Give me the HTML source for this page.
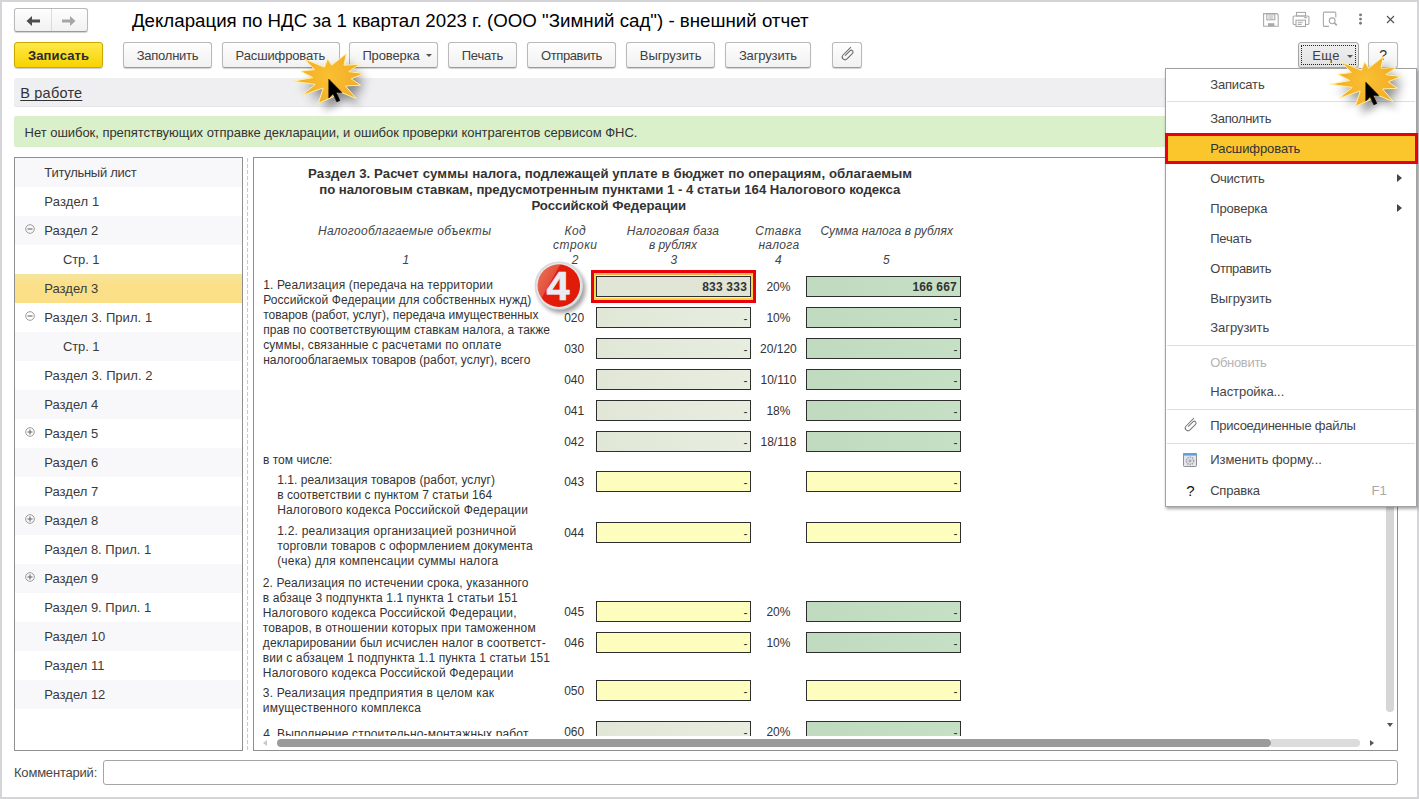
<!DOCTYPE html><html><head><meta charset="utf-8"><style>
html,body{margin:0;padding:0;}
body{width:1419px;height:799px;position:relative;overflow:hidden;background:#fff;font-family:"Liberation Sans",sans-serif;}
.t{position:absolute;white-space:nowrap;font-family:"Liberation Sans",sans-serif;}
.btn{position:absolute;box-sizing:border-box;border:1px solid #b9b9b9;border-bottom-color:#9a9a9a;border-radius:3px;background:linear-gradient(#fefefe,#f1f1f1);box-shadow:0 1px 1px rgba(0,0,0,0.18);}
.fld{position:absolute;box-sizing:border-box;border:1px solid #2e2e2e;}
.lg{background:linear-gradient(90deg,#e1e7d7,#e8eedf);}
.dg{background:linear-gradient(90deg,#bfdabf,#c6e0c6);}
.yl{background:#fdfdbe;}
</style></head><body>
<div style="position:absolute;left:0px;top:0px;width:1419px;height:2px;background:#d5d4d9"></div><div style="position:absolute;left:0px;top:0px;width:2px;height:799px;background:#d5d4d9"></div><div style="position:absolute;left:1417px;top:0px;width:2px;height:799px;background:#d5d4d9"></div><div style="position:absolute;left:0px;top:797px;width:1419px;height:2px;background:#d5d4d9"></div><div class="btn" style="left:14px;top:8px;width:74px;height:24px;"></div><div style="position:absolute;left:51px;top:9px;width:1px;height:22px;background:#dcdcdc"></div><svg style="position:absolute;left:24px;top:14px" width="18" height="14" viewBox="0 0 18 14"><path d="M2.5 7 L8 2 L8 5.6 L16 5.6 L16 8.4 L8 8.4 L8 12 Z" fill="#4d4d4d"/></svg><svg style="position:absolute;left:60px;top:14px" width="18" height="14" viewBox="0 0 18 14"><path d="M15.5 7 L10 2 L10 5.6 L2 5.6 L2 8.4 L10 8.4 L10 12 Z" fill="#a6a6a6"/></svg><div class="t" style="left:131.9px;top:12.1px;font-size:18.7px;line-height:18.7px;color:#000;font-weight:normal;font-style:normal;letter-spacing:0.003px;">Декларация по НДС за 1 квартал 2023 г. (ООО "Зимний сад") - внешний отчет</div><svg style="position:absolute;left:1250px;top:0px" width="169" height="40" viewBox="1250 0 169 40" fill="none" stroke="#a9a9a9" stroke-width="1.1">
<path d="M13.6 13.6 H27 L28.2 14.8 V26.3 H13.6 Z" transform="translate(1250,0)"/>
<rect x="1266.8" y="14" width="8" height="5.8"/>
<path d="M1268.3 16 H1273.3 M1268.3 18 H1273.3"/>
<rect x="1268" y="23.2" width="6.4" height="3.1" fill="#a9a9a9" stroke="none"/>
<rect x="1296.5" y="12.4" width="9" height="3.6"/>
<path d="M1296 24.5 H1294.3 A1.2 1.2 0 0 1 1293.1 23.3 V17.2 A1.2 1.2 0 0 1 1294.3 16 H1307.7 A1.2 1.2 0 0 1 1308.9 17.2 V23.3 A1.2 1.2 0 0 1 1307.7 24.5 H1306"/>
<rect x="1296" y="20.2" width="9.5" height="6.3"/>
<path d="M1297.8 22.3 H1302.8 M1297.8 24.4 H1301.5 M1304.3 17.6 H1306.8"/>
<path d="M1329 26.4 H1324.4 A1 1 0 0 1 1323.4 25.4 V13.1 A1 1 0 0 1 1324.4 12.1 H1334.8 A1 1 0 0 1 1335.8 13.1 V17.5"/>
<circle cx="1332.2" cy="20.8" r="2.9"/>
<path d="M1334.3 22.9 L1336.8 25.4" stroke-width="1.6"/>
<path d="M1387 16 L1394 23 M1394 16 L1387 23" stroke="#505050" stroke-width="1.1"/>
<circle cx="1360.5" cy="14.9" r="1.45" fill="#7a7a7a" stroke="none"/>
<circle cx="1360.5" cy="19.1" r="1.45" fill="#7a7a7a" stroke="none"/>
<circle cx="1360.5" cy="23.3" r="1.45" fill="#7a7a7a" stroke="none"/>
</svg><div style="position:absolute;left:14px;top:42px;width:89px;height:26px;box-sizing:border-box;border:1px solid #c9a800;border-radius:3px;background:linear-gradient(#ffe84a,#f7d300);box-shadow:0 1px 1px rgba(0,0,0,0.2)"></div><div class="t" style="left:28.0px;top:49.1px;font-size:13px;line-height:13px;color:#2a2a2a;font-weight:bold;font-style:normal;letter-spacing:0.116px;">Записать</div><div class="btn" style="left:123px;top:42px;width:89px;height:26px;"></div><div class="t" style="left:136.7px;top:49.1px;font-size:13px;line-height:13px;color:#404040;font-weight:normal;font-style:normal;letter-spacing:-0.241px;">Заполнить</div><div class="btn" style="left:222px;top:42px;width:118px;height:26px;"></div><div class="t" style="left:235.6px;top:49.1px;font-size:13px;line-height:13px;color:#404040;font-weight:normal;font-style:normal;letter-spacing:-0.133px;">Расшифровать</div><div class="btn" style="left:349px;top:42px;width:89px;height:26px;"></div><div class="t" style="left:362.4px;top:49.1px;font-size:13px;line-height:13px;color:#404040;font-weight:normal;font-style:normal;letter-spacing:-0.121px;">Проверка</div><div style="position:absolute;left:425.5px;top:54px;width:0;height:0;border-left:3.5px solid transparent;border-right:3.5px solid transparent;border-top:3.5px solid #555"></div><div class="btn" style="left:448px;top:42px;width:69px;height:26px;"></div><div class="t" style="left:461.7px;top:49.1px;font-size:13px;line-height:13px;color:#404040;font-weight:normal;font-style:normal;letter-spacing:-0.196px;">Печать</div><div class="btn" style="left:527px;top:42px;width:89px;height:26px;"></div><div class="t" style="left:540.9px;top:49.1px;font-size:13px;line-height:13px;color:#404040;font-weight:normal;font-style:normal;letter-spacing:-0.371px;">Отправить</div><div class="btn" style="left:626px;top:42px;width:89px;height:26px;"></div><div class="t" style="left:639.8px;top:49.1px;font-size:13px;line-height:13px;color:#404040;font-weight:normal;font-style:normal;letter-spacing:-0.073px;">Выгрузить</div><div class="btn" style="left:725px;top:42px;width:86px;height:26px;"></div><div class="t" style="left:738.9px;top:49.1px;font-size:13px;line-height:13px;color:#404040;font-weight:normal;font-style:normal;letter-spacing:-0.145px;">Загрузить</div><div class="btn" style="left:832px;top:42px;width:30px;height:26px;"></div><svg style="position:absolute;left:837.3px;top:45.3px" width="20" height="20" viewBox="-10 -10 20 20"><path d="M-3 -9 L-3 3 A3 3 0 0 0 3 3 L3 -5.5 A2 2 0 0 0 -1 -5.5 L-1 2" fill="none" stroke="#6a6a6a" stroke-width="1.15" transform="rotate(45) scale(0.92)"/></svg><div style="position:absolute;left:1298px;top:42px;width:61px;height:26px;box-sizing:border-box;border:1px solid #a6a6a6;border-radius:3px;background:linear-gradient(#f0f0f0,#e2e2e2);box-shadow:0 1px 1px rgba(0,0,0,0.2)"></div><div style="position:absolute;left:1301px;top:45px;width:55px;height:20px;box-sizing:border-box;border:1px dotted #222;"></div><div class="t" style="left:1312.2px;top:48.8px;font-size:13px;line-height:13px;color:#404040;font-weight:normal;font-style:normal;letter-spacing:0.366px;">Еще</div><div style="position:absolute;left:1346.5px;top:54.5px;width:0;height:0;border-left:3.5px solid transparent;border-right:3.5px solid transparent;border-top:3.5px solid #555"></div><div class="btn" style="left:1368px;top:42px;width:30px;height:26px;"></div><div class="t" style="left:1379.2px;top:48.1px;font-size:14px;line-height:14px;color:#333;font-weight:normal;font-style:normal;">?</div><div style="position:absolute;left:14px;top:78px;width:1383px;height:29px;background:#efeef1;border-radius:3px;box-shadow:inset 0 -1px 0 #e6e5e9"></div><div class="t" style="left:20.2px;top:86.4px;font-size:14.5px;line-height:14.5px;color:#333;font-weight:normal;font-style:normal;letter-spacing:0.223px;text-decoration:underline;text-decoration-skip-ink:none;text-underline-offset:2px;">В работе</div><div style="position:absolute;left:14px;top:116px;width:1383px;height:31px;background:#d9f0cb;border-radius:2px"></div><div class="t" style="left:24.6px;top:125.9px;font-size:13px;line-height:13px;color:#333;font-weight:normal;font-style:normal;letter-spacing:-0.036px;">Нет ошибок, препятствующих отправке декларации, и ошибок проверки контрагентов сервисом ФНС.</div><div style="position:absolute;left:14px;top:157px;width:229px;height:594px;box-sizing:border-box;border:1px solid #8f8f8f;background:#fff"></div><div style="position:absolute;left:15px;top:158px;width:227px;height:29px;background:#f8f8fb"></div><div class="t" style="left:44.3px;top:166.4px;font-size:13px;line-height:13px;color:#3a3a3a;font-weight:normal;font-style:normal;letter-spacing:-0.275px;">Титульный лист</div><div class="t" style="left:44.3px;top:195.4px;font-size:13px;line-height:13px;color:#3a3a3a;font-weight:normal;font-style:normal;letter-spacing:0.143px;">Раздел 1</div><div style="position:absolute;left:15px;top:216px;width:227px;height:29px;background:#f8f8fb"></div><div class="t" style="left:44.3px;top:224.4px;font-size:13px;line-height:13px;color:#3a3a3a;font-weight:normal;font-style:normal;">Раздел 2</div><svg style="position:absolute;left:25px;top:224.3px" width="10" height="10" viewBox="0 0 10 10"><circle cx="5" cy="5" r="4.3" fill="none" stroke="#999" stroke-width="1"/><path d="M2.5 5 H7.5" stroke="#666" stroke-width="1.1"/></svg><div class="t" style="left:62.9px;top:253.4px;font-size:13px;line-height:13px;color:#3a3a3a;font-weight:normal;font-style:normal;letter-spacing:-0.086px;">Стр. 1</div><div style="position:absolute;left:15px;top:274px;width:227px;height:29px;background:linear-gradient(#f6e49c,#fbe08a 35%,#fbdf87)"></div><div class="t" style="left:44.3px;top:282.4px;font-size:13px;line-height:13px;color:#3a3a3a;font-weight:normal;font-style:normal;">Раздел 3</div><div class="t" style="left:44.3px;top:311.4px;font-size:13px;line-height:13px;color:#3a3a3a;font-weight:normal;font-style:normal;letter-spacing:0.057px;">Раздел 3. Прил. 1</div><svg style="position:absolute;left:25px;top:311.3px" width="10" height="10" viewBox="0 0 10 10"><circle cx="5" cy="5" r="4.3" fill="none" stroke="#999" stroke-width="1"/><path d="M2.5 5 H7.5" stroke="#666" stroke-width="1.1"/></svg><div style="position:absolute;left:15px;top:332px;width:227px;height:29px;background:#f8f8fb"></div><div class="t" style="left:62.9px;top:340.4px;font-size:13px;line-height:13px;color:#3a3a3a;font-weight:normal;font-style:normal;letter-spacing:-0.086px;">Стр. 1</div><div class="t" style="left:44.3px;top:369.4px;font-size:13px;line-height:13px;color:#3a3a3a;font-weight:normal;font-style:normal;letter-spacing:0.082px;">Раздел 3. Прил. 2</div><div style="position:absolute;left:15px;top:390px;width:227px;height:29px;background:#f8f8fb"></div><div class="t" style="left:44.3px;top:398.4px;font-size:13px;line-height:13px;color:#3a3a3a;font-weight:normal;font-style:normal;">Раздел 4</div><div class="t" style="left:44.3px;top:427.4px;font-size:13px;line-height:13px;color:#3a3a3a;font-weight:normal;font-style:normal;">Раздел 5</div><svg style="position:absolute;left:25px;top:427.3px" width="10" height="10" viewBox="0 0 10 10"><circle cx="5" cy="5" r="4.3" fill="none" stroke="#999" stroke-width="1"/><path d="M2.5 5 H7.5 M5 2.5 V7.5" stroke="#666" stroke-width="1.1"/></svg><div style="position:absolute;left:15px;top:448px;width:227px;height:29px;background:#f8f8fb"></div><div class="t" style="left:44.3px;top:456.4px;font-size:13px;line-height:13px;color:#3a3a3a;font-weight:normal;font-style:normal;">Раздел 6</div><div class="t" style="left:44.3px;top:485.4px;font-size:13px;line-height:13px;color:#3a3a3a;font-weight:normal;font-style:normal;">Раздел 7</div><div style="position:absolute;left:15px;top:506px;width:227px;height:29px;background:#f8f8fb"></div><div class="t" style="left:44.3px;top:514.4px;font-size:13px;line-height:13px;color:#3a3a3a;font-weight:normal;font-style:normal;">Раздел 8</div><svg style="position:absolute;left:25px;top:514.3px" width="10" height="10" viewBox="0 0 10 10"><circle cx="5" cy="5" r="4.3" fill="none" stroke="#999" stroke-width="1"/><path d="M2.5 5 H7.5 M5 2.5 V7.5" stroke="#666" stroke-width="1.1"/></svg><div class="t" style="left:44.3px;top:543.4px;font-size:13px;line-height:13px;color:#3a3a3a;font-weight:normal;font-style:normal;">Раздел 8. Прил. 1</div><div style="position:absolute;left:15px;top:564px;width:227px;height:29px;background:#f8f8fb"></div><div class="t" style="left:44.3px;top:572.4px;font-size:13px;line-height:13px;color:#3a3a3a;font-weight:normal;font-style:normal;">Раздел 9</div><svg style="position:absolute;left:25px;top:572.3px" width="10" height="10" viewBox="0 0 10 10"><circle cx="5" cy="5" r="4.3" fill="none" stroke="#999" stroke-width="1"/><path d="M2.5 5 H7.5 M5 2.5 V7.5" stroke="#666" stroke-width="1.1"/></svg><div class="t" style="left:44.3px;top:601.4px;font-size:13px;line-height:13px;color:#3a3a3a;font-weight:normal;font-style:normal;">Раздел 9. Прил. 1</div><div style="position:absolute;left:15px;top:622px;width:227px;height:29px;background:#f8f8fb"></div><div class="t" style="left:44.3px;top:630.4px;font-size:13px;line-height:13px;color:#3a3a3a;font-weight:normal;font-style:normal;">Раздел 10</div><div class="t" style="left:44.3px;top:659.4px;font-size:13px;line-height:13px;color:#3a3a3a;font-weight:normal;font-style:normal;">Раздел 11</div><div style="position:absolute;left:15px;top:680px;width:227px;height:29px;background:#f8f8fb"></div><div class="t" style="left:44.3px;top:688.4px;font-size:13px;line-height:13px;color:#3a3a3a;font-weight:normal;font-style:normal;">Раздел 12</div><div style="position:absolute;left:247px;top:158px;width:1px;height:592px;background:repeating-linear-gradient(#cacaca 0 4px,transparent 4px 6px)"></div><div style="position:absolute;left:253px;top:157px;width:1145px;height:594px;box-sizing:border-box;border:1px solid #8f8f8f;background:#fff"></div><div style="position:absolute;left:254px;top:158px;width:1131px;height:578px;overflow:hidden;"><div class="t" style="left:54.1px;top:9.3px;font-size:13.2px;line-height:13.2px;color:#333;font-weight:bold;font-style:normal;letter-spacing:0.095px;">Раздел 3. Расчет суммы налога, подлежащей уплате в бюджет по операциям, облагаемым</div><div class="t" style="left:65.2px;top:25.3px;font-size:13.2px;line-height:13.2px;color:#333;font-weight:bold;font-style:normal;letter-spacing:-0.021px;">по налоговым ставкам, предусмотренным пунктами 1 - 4 статьи 164 Налогового кодекса</div><div class="t" style="left:277.4px;top:41.3px;font-size:13.2px;line-height:13.2px;color:#333;font-weight:bold;font-style:normal;">Российской Федерации</div><div class="t" style="left:63.9px;top:66.7px;font-size:12px;line-height:12px;color:#444;font-weight:normal;font-style:italic;letter-spacing:0.329px;">Налогооблагаемые объекты</div><div class="t" style="left:310.4px;top:66.7px;font-size:12px;line-height:12px;color:#444;font-weight:normal;font-style:italic;letter-spacing:0.455px;">Код</div><div class="t" style="left:299.1px;top:81.1px;font-size:12px;line-height:12px;color:#444;font-weight:normal;font-style:italic;letter-spacing:0.471px;">строки</div><div class="t" style="left:372.8px;top:66.7px;font-size:12px;line-height:12px;color:#444;font-weight:normal;font-style:italic;letter-spacing:0.264px;">Налоговая база</div><div class="t" style="left:394.9px;top:81.1px;font-size:12px;line-height:12px;color:#444;font-weight:normal;font-style:italic;letter-spacing:0.029px;">в рублях</div><div class="t" style="left:501.3px;top:66.7px;font-size:12px;line-height:12px;color:#444;font-weight:normal;font-style:italic;letter-spacing:0.417px;">Ставка</div><div class="t" style="left:504.4px;top:81.1px;font-size:12px;line-height:12px;color:#444;font-weight:normal;font-style:italic;letter-spacing:0.334px;">налога</div><div class="t" style="left:566.5px;top:66.7px;font-size:12px;line-height:12px;color:#444;font-weight:normal;font-style:italic;letter-spacing:0.062px;">Сумма налога в рублях</div><div class="t" style="left:148.6px;top:95.5px;font-size:12px;line-height:12px;color:#444;font-weight:normal;font-style:italic;">1</div><div class="t" style="left:317.7px;top:95.5px;font-size:12px;line-height:12px;color:#444;font-weight:normal;font-style:italic;">2</div><div class="t" style="left:416.4px;top:95.5px;font-size:12px;line-height:12px;color:#444;font-weight:normal;font-style:italic;">3</div><div class="t" style="left:520.9px;top:95.5px;font-size:12px;line-height:12px;color:#444;font-weight:normal;font-style:italic;">4</div><div class="t" style="left:629.1px;top:95.5px;font-size:12px;line-height:12px;color:#444;font-weight:normal;font-style:italic;">5</div><div class="t" style="left:9.2px;top:121.1px;font-size:12px;line-height:12px;color:#333;font-weight:normal;font-style:normal;letter-spacing:0.152px;">1. Реализация (передача на территории</div><div class="t" style="left:9.2px;top:135.9px;font-size:12px;line-height:12px;color:#333;font-weight:normal;font-style:normal;letter-spacing:0.081px;">Российской Федерации для собственных нужд)</div><div class="t" style="left:9.2px;top:150.5px;font-size:12px;line-height:12px;color:#333;font-weight:normal;font-style:normal;letter-spacing:0.004px;">товаров (работ, услуг), передача имущественных</div><div class="t" style="left:9.2px;top:165.8px;font-size:12px;line-height:12px;color:#333;font-weight:normal;font-style:normal;letter-spacing:0.056px;">прав по соответствующим ставкам налога, а также</div><div class="t" style="left:9.2px;top:180.8px;font-size:12px;line-height:12px;color:#333;font-weight:normal;font-style:normal;letter-spacing:0.143px;">суммы, связанные с расчетами по оплате</div><div class="t" style="left:9.2px;top:195.8px;font-size:12px;line-height:12px;color:#333;font-weight:normal;font-style:normal;letter-spacing:-0.003px;">налогооблагаемых товаров (работ, услуг), всего</div><div class="t" style="left:9.0px;top:295.9px;font-size:12px;line-height:12px;color:#333;font-weight:normal;font-style:normal;letter-spacing:0.012px;">в том числе:</div><div class="t" style="left:23.2px;top:316.0px;font-size:12px;line-height:12px;color:#333;font-weight:normal;font-style:normal;letter-spacing:0.065px;">1.1. реализация товаров (работ, услуг)</div><div class="t" style="left:23.2px;top:331.0px;font-size:12px;line-height:12px;color:#333;font-weight:normal;font-style:normal;letter-spacing:0.027px;">в соответствии с пунктом 7 статьи 164</div><div class="t" style="left:23.2px;top:345.8px;font-size:12px;line-height:12px;color:#333;font-weight:normal;font-style:normal;letter-spacing:0.169px;">Налогового кодекса Российской Федерации</div><div class="t" style="left:23.2px;top:367.1px;font-size:12px;line-height:12px;color:#333;font-weight:normal;font-style:normal;letter-spacing:0.219px;">1.2. реализация организацией розничной</div><div class="t" style="left:23.2px;top:381.8px;font-size:12px;line-height:12px;color:#333;font-weight:normal;font-style:normal;letter-spacing:0.092px;">торговли товаров с оформлением документа</div><div class="t" style="left:23.2px;top:396.8px;font-size:12px;line-height:12px;color:#333;font-weight:normal;font-style:normal;letter-spacing:0.181px;">(чека) для компенсации суммы налога</div><div class="t" style="left:8.8px;top:418.9px;font-size:12px;line-height:12px;color:#333;font-weight:normal;font-style:normal;letter-spacing:0.138px;">2. Реализация по истечении срока, указанного</div><div class="t" style="left:8.8px;top:433.8px;font-size:12px;line-height:12px;color:#333;font-weight:normal;font-style:normal;letter-spacing:0.084px;">в абзаце 3 подпункта 1.1 пункта 1 статьи 151</div><div class="t" style="left:8.8px;top:448.7px;font-size:12px;line-height:12px;color:#333;font-weight:normal;font-style:normal;letter-spacing:0.154px;">Налогового кодекса Российской Федерации,</div><div class="t" style="left:8.8px;top:463.8px;font-size:12px;line-height:12px;color:#333;font-weight:normal;font-style:normal;letter-spacing:0.133px;">товаров, в отношении которых при таможенном</div><div class="t" style="left:8.8px;top:478.8px;font-size:12px;line-height:12px;color:#333;font-weight:normal;font-style:normal;letter-spacing:0.078px;">декларировании был исчислен налог в соответст-</div><div class="t" style="left:8.8px;top:493.8px;font-size:12px;line-height:12px;color:#333;font-weight:normal;font-style:normal;letter-spacing:0.104px;">вии с абзацем 1 подпункта 1.1 пункта 1 статьи 151</div><div class="t" style="left:8.8px;top:508.8px;font-size:12px;line-height:12px;color:#333;font-weight:normal;font-style:normal;letter-spacing:0.166px;">Налогового кодекса Российской Федерации</div><div class="t" style="left:8.8px;top:528.8px;font-size:12px;line-height:12px;color:#333;font-weight:normal;font-style:normal;letter-spacing:0.201px;">3. Реализация предприятия в целом как</div><div class="t" style="left:8.8px;top:544.3px;font-size:12px;line-height:12px;color:#333;font-weight:normal;font-style:normal;letter-spacing:0.157px;">имущественного комплекса</div><div class="t" style="left:9.2px;top:570.3px;font-size:12px;line-height:12px;color:#333;font-weight:normal;font-style:normal;letter-spacing:0.167px;">4. Выполнение строительно-монтажных работ</div><div class="fld lg" style="left:342px;top:118px;width:155px;height:21px;"></div><div class="fld dg" style="left:552px;top:118px;width:155px;height:21px;"></div><div class="t" style="left:448.2px;top:123.1px;font-size:12px;line-height:12px;color:#333;font-weight:bold;font-style:normal;letter-spacing:0.207px;">833 333</div><div class="t" style="left:658.4px;top:123.1px;font-size:12px;line-height:12px;color:#333;font-weight:bold;font-style:normal;letter-spacing:0.157px;">166 667</div><div class="t" style="left:512.4px;top:123.1px;font-size:12px;line-height:12px;color:#333;font-weight:normal;font-style:normal;">20%</div><div class="t" style="left:310.2px;top:154.1px;font-size:12px;line-height:12px;color:#333;font-weight:normal;font-style:normal;">020</div><div class="fld lg" style="left:342px;top:149px;width:155px;height:21px;"></div><div class="fld dg" style="left:552px;top:149px;width:155px;height:21px;"></div><div class="t" style="left:489.6px;top:155.1px;font-size:12px;line-height:12px;color:#333;font-weight:normal;font-style:normal;">-</div><div class="t" style="left:699.6px;top:155.1px;font-size:12px;line-height:12px;color:#333;font-weight:normal;font-style:normal;">-</div><div class="t" style="left:512.4px;top:154.1px;font-size:12px;line-height:12px;color:#333;font-weight:normal;font-style:normal;">10%</div><div class="t" style="left:310.2px;top:185.1px;font-size:12px;line-height:12px;color:#333;font-weight:normal;font-style:normal;">030</div><div class="fld lg" style="left:342px;top:180px;width:155px;height:21px;"></div><div class="fld dg" style="left:552px;top:180px;width:155px;height:21px;"></div><div class="t" style="left:489.6px;top:186.1px;font-size:12px;line-height:12px;color:#333;font-weight:normal;font-style:normal;">-</div><div class="t" style="left:699.6px;top:186.1px;font-size:12px;line-height:12px;color:#333;font-weight:normal;font-style:normal;">-</div><div class="t" style="left:506.1px;top:185.1px;font-size:12px;line-height:12px;color:#333;font-weight:normal;font-style:normal;">20/120</div><div class="t" style="left:310.2px;top:216.1px;font-size:12px;line-height:12px;color:#333;font-weight:normal;font-style:normal;">040</div><div class="fld lg" style="left:342px;top:211px;width:155px;height:21px;"></div><div class="fld dg" style="left:552px;top:211px;width:155px;height:21px;"></div><div class="t" style="left:489.6px;top:217.1px;font-size:12px;line-height:12px;color:#333;font-weight:normal;font-style:normal;">-</div><div class="t" style="left:699.6px;top:217.1px;font-size:12px;line-height:12px;color:#333;font-weight:normal;font-style:normal;">-</div><div class="t" style="left:506.5px;top:216.1px;font-size:12px;line-height:12px;color:#333;font-weight:normal;font-style:normal;">10/110</div><div class="t" style="left:310.2px;top:247.1px;font-size:12px;line-height:12px;color:#333;font-weight:normal;font-style:normal;">041</div><div class="fld lg" style="left:342px;top:242px;width:155px;height:21px;"></div><div class="fld dg" style="left:552px;top:242px;width:155px;height:21px;"></div><div class="t" style="left:489.6px;top:248.1px;font-size:12px;line-height:12px;color:#333;font-weight:normal;font-style:normal;">-</div><div class="t" style="left:699.6px;top:248.1px;font-size:12px;line-height:12px;color:#333;font-weight:normal;font-style:normal;">-</div><div class="t" style="left:512.4px;top:247.1px;font-size:12px;line-height:12px;color:#333;font-weight:normal;font-style:normal;">18%</div><div class="t" style="left:310.2px;top:278.1px;font-size:12px;line-height:12px;color:#333;font-weight:normal;font-style:normal;">042</div><div class="fld lg" style="left:342px;top:273px;width:155px;height:21px;"></div><div class="fld dg" style="left:552px;top:273px;width:155px;height:21px;"></div><div class="t" style="left:489.6px;top:279.1px;font-size:12px;line-height:12px;color:#333;font-weight:normal;font-style:normal;">-</div><div class="t" style="left:699.6px;top:279.1px;font-size:12px;line-height:12px;color:#333;font-weight:normal;font-style:normal;">-</div><div class="t" style="left:506.5px;top:278.1px;font-size:12px;line-height:12px;color:#333;font-weight:normal;font-style:normal;">18/118</div><div class="t" style="left:310.2px;top:318.1px;font-size:12px;line-height:12px;color:#333;font-weight:normal;font-style:normal;">043</div><div class="fld yl" style="left:342px;top:313px;width:155px;height:21px;"></div><div class="fld yl" style="left:552px;top:313px;width:155px;height:21px;"></div><div class="t" style="left:489.6px;top:319.1px;font-size:12px;line-height:12px;color:#333;font-weight:normal;font-style:normal;">-</div><div class="t" style="left:699.6px;top:319.1px;font-size:12px;line-height:12px;color:#333;font-weight:normal;font-style:normal;">-</div><div class="t" style="left:310.2px;top:369.1px;font-size:12px;line-height:12px;color:#333;font-weight:normal;font-style:normal;">044</div><div class="fld yl" style="left:342px;top:364px;width:155px;height:21px;"></div><div class="fld yl" style="left:552px;top:364px;width:155px;height:21px;"></div><div class="t" style="left:489.6px;top:370.1px;font-size:12px;line-height:12px;color:#333;font-weight:normal;font-style:normal;">-</div><div class="t" style="left:699.6px;top:370.1px;font-size:12px;line-height:12px;color:#333;font-weight:normal;font-style:normal;">-</div><div class="t" style="left:310.2px;top:448.1px;font-size:12px;line-height:12px;color:#333;font-weight:normal;font-style:normal;">045</div><div class="fld yl" style="left:342px;top:443px;width:155px;height:21px;"></div><div class="fld dg" style="left:552px;top:443px;width:155px;height:21px;"></div><div class="t" style="left:489.6px;top:449.1px;font-size:12px;line-height:12px;color:#333;font-weight:normal;font-style:normal;">-</div><div class="t" style="left:699.6px;top:449.1px;font-size:12px;line-height:12px;color:#333;font-weight:normal;font-style:normal;">-</div><div class="t" style="left:512.4px;top:448.1px;font-size:12px;line-height:12px;color:#333;font-weight:normal;font-style:normal;">20%</div><div class="t" style="left:310.2px;top:479.1px;font-size:12px;line-height:12px;color:#333;font-weight:normal;font-style:normal;">046</div><div class="fld yl" style="left:342px;top:474px;width:155px;height:21px;"></div><div class="fld dg" style="left:552px;top:474px;width:155px;height:21px;"></div><div class="t" style="left:489.6px;top:480.1px;font-size:12px;line-height:12px;color:#333;font-weight:normal;font-style:normal;">-</div><div class="t" style="left:699.6px;top:480.1px;font-size:12px;line-height:12px;color:#333;font-weight:normal;font-style:normal;">-</div><div class="t" style="left:512.4px;top:479.1px;font-size:12px;line-height:12px;color:#333;font-weight:normal;font-style:normal;">10%</div><div class="t" style="left:310.2px;top:527.1px;font-size:12px;line-height:12px;color:#333;font-weight:normal;font-style:normal;">050</div><div class="fld yl" style="left:342px;top:522px;width:155px;height:21px;"></div><div class="fld yl" style="left:552px;top:522px;width:155px;height:21px;"></div><div class="t" style="left:489.6px;top:528.1px;font-size:12px;line-height:12px;color:#333;font-weight:normal;font-style:normal;">-</div><div class="t" style="left:699.6px;top:528.1px;font-size:12px;line-height:12px;color:#333;font-weight:normal;font-style:normal;">-</div><div class="t" style="left:310.2px;top:568.1px;font-size:12px;line-height:12px;color:#333;font-weight:normal;font-style:normal;">060</div><div class="fld lg" style="left:342px;top:563px;width:155px;height:21px;"></div><div class="fld dg" style="left:552px;top:563px;width:155px;height:21px;"></div><div class="t" style="left:489.6px;top:569.1px;font-size:12px;line-height:12px;color:#333;font-weight:normal;font-style:normal;">-</div><div class="t" style="left:699.6px;top:569.1px;font-size:12px;line-height:12px;color:#333;font-weight:normal;font-style:normal;">-</div><div class="t" style="left:512.4px;top:568.1px;font-size:12px;line-height:12px;color:#333;font-weight:normal;font-style:normal;">20%</div></div><div style="position:absolute;left:591px;top:270px;width:165px;height:33px;box-sizing:border-box;border:3px solid #e8000a;"></div><div style="position:absolute;left:594px;top:273px;width:159px;height:27px;box-sizing:border-box;border:2px solid #fbd649;border-top-color:#f7b04a;background:#fff3a6;"></div><div class="fld" style="left:596px;top:276px;width:155px;height:21px;background:#e1e5d5;"></div><div class="t" style="left:702.2px;top:281.1px;font-size:12px;line-height:12px;color:#333;font-weight:bold;font-style:normal;letter-spacing:0.207px;">833 333</div><div style="position:absolute;left:277px;top:739px;width:994px;height:8px;background:#9b9b9b;border-radius:4px"></div><div style="position:absolute;left:1271px;top:739px;width:89px;height:8px;background:#dcdcdc;border-radius:0 4px 4px 0"></div><div style="position:absolute;left:263.3px;top:739.8px;width:0;height:0;border-top:3.5px solid transparent;border-bottom:3.5px solid transparent;border-right:4px solid #c8c8c8"></div><div style="position:absolute;left:1370px;top:739.5px;width:0;height:0;border-top:3.5px solid transparent;border-bottom:3.5px solid transparent;border-left:4px solid #555"></div><div style="position:absolute;left:1386px;top:160px;width:7.6px;height:552px;background:#d6d6d6;border-radius:3.8px"></div><div style="position:absolute;left:1387px;top:723px;width:0;height:0;border-left:3.5px solid transparent;border-right:3.5px solid transparent;border-top:4px solid #555"></div><div class="t" style="left:14.0px;top:766.4px;font-size:13px;line-height:13px;color:#484848;font-weight:normal;font-style:normal;letter-spacing:-0.201px;">Комментарий:</div><div style="position:absolute;left:103px;top:760px;width:1295px;height:25px;box-sizing:border-box;border:1px solid #a5a5a5;border-radius:3px;background:#fff"></div><div style="position:absolute;left:1165px;top:68px;width:252px;height:439px;box-sizing:border-box;border:1px solid #a2a2a2;background:#fff;box-shadow:1px 2px 3px rgba(0,0,0,0.35)"></div><div style="position:absolute;left:1167px;top:101px;width:248px;height:1px;background:#dedede"></div><div style="position:absolute;left:1167px;top:345px;width:248px;height:1px;background:#dedede"></div><div style="position:absolute;left:1167px;top:409px;width:248px;height:1px;background:#dedede"></div><div style="position:absolute;left:1167px;top:443px;width:248px;height:1px;background:#dedede"></div><div style="position:absolute;left:1165px;top:133px;width:253px;height:31px;box-sizing:border-box;border:3px solid #e8000a;background:#fbc52c"></div><div class="t" style="left:1210.2px;top:142.4px;font-size:13px;line-height:13px;color:#333;font-weight:normal;font-style:normal;letter-spacing:-0.097px;">Расшифровать</div><div class="t" style="left:1210.2px;top:78.3px;font-size:13px;line-height:13px;color:#444;font-weight:normal;font-style:normal;letter-spacing:-0.154px;">Записать</div><div class="t" style="left:1210.2px;top:112.2px;font-size:13px;line-height:13px;color:#444;font-weight:normal;font-style:normal;letter-spacing:-0.316px;">Заполнить</div><div class="t" style="left:1210.2px;top:172.4px;font-size:13px;line-height:13px;color:#444;font-weight:normal;font-style:normal;letter-spacing:-0.297px;">Очистить</div><div class="t" style="left:1210.2px;top:202.2px;font-size:13px;line-height:13px;color:#444;font-weight:normal;font-style:normal;letter-spacing:-0.150px;">Проверка</div><div class="t" style="left:1210.2px;top:232.4px;font-size:13px;line-height:13px;color:#444;font-weight:normal;font-style:normal;letter-spacing:-0.216px;">Печать</div><div class="t" style="left:1210.2px;top:262.0px;font-size:13px;line-height:13px;color:#444;font-weight:normal;font-style:normal;letter-spacing:-0.396px;">Отправить</div><div class="t" style="left:1210.2px;top:292.2px;font-size:13px;line-height:13px;color:#444;font-weight:normal;font-style:normal;letter-spacing:-0.085px;">Выгрузить</div><div class="t" style="left:1210.2px;top:321.4px;font-size:13px;line-height:13px;color:#444;font-weight:normal;font-style:normal;letter-spacing:-0.032px;">Загрузить</div><div class="t" style="left:1210.2px;top:385.4px;font-size:13px;line-height:13px;color:#444;font-weight:normal;font-style:normal;letter-spacing:-0.068px;">Настройка...</div><div class="t" style="left:1210.2px;top:419.4px;font-size:13px;line-height:13px;color:#444;font-weight:normal;font-style:normal;letter-spacing:-0.257px;">Присоединенные файлы</div><div class="t" style="left:1210.2px;top:453.4px;font-size:13px;line-height:13px;color:#444;font-weight:normal;font-style:normal;letter-spacing:-0.057px;">Изменить форму...</div><div class="t" style="left:1210.2px;top:484.0px;font-size:13px;line-height:13px;color:#444;font-weight:normal;font-style:normal;letter-spacing:-0.219px;">Справка</div><div class="t" style="left:1210.2px;top:355.7px;font-size:13px;line-height:13px;color:#b4b4b4;font-weight:normal;font-style:normal;letter-spacing:-0.323px;">Обновить</div><div class="t" style="left:1371.6px;top:484.0px;font-size:13px;line-height:13px;color:#a8a8a8;font-weight:normal;font-style:normal;">F1</div><div style="position:absolute;left:1397px;top:174.0px;width:0;height:0;border-top:4.5px solid transparent;border-bottom:4.5px solid transparent;border-left:5px solid #444"></div><div style="position:absolute;left:1397px;top:203.5px;width:0;height:0;border-top:4.5px solid transparent;border-bottom:4.5px solid transparent;border-left:5px solid #444"></div><svg style="position:absolute;left:1180.3px;top:416px" width="20" height="20" viewBox="-10 -10 20 20"><path d="M-3 -9 L-3 3 A3 3 0 0 0 3 3 L3 -5.5 A2 2 0 0 0 -1 -5.5 L-1 2" fill="none" stroke="#7a7a7a" stroke-width="1.15" transform="rotate(45) scale(0.92)"/></svg><svg style="position:absolute;left:1182px;top:452px" width="16" height="16" viewBox="0 0 16 16"><rect x="1.5" y="1.5" width="13" height="13" rx="0.8" fill="#e4e6ea" stroke="#8c8f94" stroke-width="1"/><rect x="1.3" y="1" width="13.4" height="2.6" fill="#5aa0e2"/><circle cx="8" cy="8.8" r="3.6" fill="none" stroke="#a2a5aa" stroke-width="1.6" stroke-dasharray="1.4 0.9"/><circle cx="8" cy="8.8" r="1.6" fill="#a9acb1"/></svg><div class="t" style="left:1186.2px;top:483.4px;font-size:15px;line-height:15px;color:#111;font-weight:normal;font-style:normal;">?</div><svg style="position:absolute;left:285.0px;top:45.0px;overflow:visible" width="90" height="75" viewBox="0 0 90 75">
<defs><filter id="sh328" x="-30%" y="-30%" width="160%" height="160%"><feGaussianBlur stdDeviation="4"/></filter>
<radialGradient id="sg328" gradientUnits="userSpaceOnUse" cx="43.80000000000001" cy="32.2" r="36"><stop offset="0" stop-color="#f9c131"/><stop offset="1" stop-color="#f2a727"/></radialGradient></defs>
<polygon points="42.6,13.8 46.6,20.2 61.4,8.6 59.0,20.2 74.3,19.4 63.8,26.6 78.7,28.6 66.2,33.8 75.5,40.2 60.6,41.0 71.0,53.4 54.2,46.6 48.0,52.0 33.4,58.2 38.2,43.0 17.4,50.2 30.2,39.4 8.2,36.2 27.8,32.6 15.8,26.2 29.4,24.6 19.8,14.2 39.4,22.2" fill="#000" opacity="0.42" transform="translate(5,7)" filter="url(#sh328)"/>
<polygon points="42.6,13.8 46.6,20.2 61.4,8.6 59.0,20.2 74.3,19.4 63.8,26.6 78.7,28.6 66.2,33.8 75.5,40.2 60.6,41.0 71.0,53.4 54.2,46.6 48.0,52.0 33.4,58.2 38.2,43.0 17.4,50.2 30.2,39.4 8.2,36.2 27.8,32.6 15.8,26.2 29.4,24.6 19.8,14.2 39.4,22.2" fill="url(#sg328)" stroke="#fff2a0" stroke-width="1" stroke-linejoin="miter"/>
<polygon points="43.8,34.2 43.8,53.0 48.1,48.8 51.8,56.8 54.8,55.5 51.2,47.6 56.8,47.5" fill="#000" stroke="#000" stroke-width="0.6"/>
</svg><svg style="position:absolute;left:1322.2px;top:47.8px;overflow:visible" width="90" height="75" viewBox="0 0 90 75">
<defs><filter id="sh1366" x="-30%" y="-30%" width="160%" height="160%"><feGaussianBlur stdDeviation="4"/></filter>
<radialGradient id="sg1366" gradientUnits="userSpaceOnUse" cx="43.80000000000001" cy="32.2" r="36"><stop offset="0" stop-color="#f9c131"/><stop offset="1" stop-color="#f2a727"/></radialGradient></defs>
<polygon points="42.6,13.8 46.6,20.2 61.4,8.6 59.0,20.2 74.3,19.4 63.8,26.6 78.7,28.6 66.2,33.8 75.5,40.2 60.6,41.0 71.0,53.4 54.2,46.6 48.0,52.0 33.4,58.2 38.2,43.0 17.4,50.2 30.2,39.4 8.2,36.2 27.8,32.6 15.8,26.2 29.4,24.6 19.8,14.2 39.4,22.2" fill="#000" opacity="0.42" transform="translate(5,7)" filter="url(#sh1366)"/>
<polygon points="42.6,13.8 46.6,20.2 61.4,8.6 59.0,20.2 74.3,19.4 63.8,26.6 78.7,28.6 66.2,33.8 75.5,40.2 60.6,41.0 71.0,53.4 54.2,46.6 48.0,52.0 33.4,58.2 38.2,43.0 17.4,50.2 30.2,39.4 8.2,36.2 27.8,32.6 15.8,26.2 29.4,24.6 19.8,14.2 39.4,22.2" fill="url(#sg1366)" stroke="#fff2a0" stroke-width="1" stroke-linejoin="miter"/>
<polygon points="43.8,34.2 43.8,53.0 48.1,48.8 51.8,56.8 54.8,55.5 51.2,47.6 56.8,47.5" fill="#000" stroke="#000" stroke-width="0.6"/>
</svg><svg style="position:absolute;left:526px;top:254px;overflow:visible" width="70" height="66" viewBox="0 0 70 66">
<defs><filter id="bsh" x="-40%" y="-40%" width="180%" height="180%"><feGaussianBlur stdDeviation="2.2"/></filter>
<radialGradient id="ringg" cx="0.5" cy="0.5" r="0.5"><stop offset="0.85" stop-color="#f4f4f6"/><stop offset="1" stop-color="#cfd0d4"/></radialGradient>
<linearGradient id="rg" x1="0" y1="0" x2="1" y2="0.55"><stop offset="0" stop-color="#ea7560"/><stop offset="0.4" stop-color="#e4513a"/><stop offset="0.42" stop-color="#e21d0c"/><stop offset="1" stop-color="#df1a08"/></linearGradient></defs>
<circle cx="35.5" cy="35" r="24" fill="#000" opacity="0.38" filter="url(#bsh)"/>
<circle cx="32.9" cy="31.6" r="24.2" fill="url(#ringg)"/>
<circle cx="32.8" cy="31.6" r="21.3" fill="url(#rg)"/>
</svg><div class="t" style="left:546.6px;top:265.0px;font-size:41.5px;line-height:41.5px;color:#e9ecf0;font-weight:bold;font-style:normal;-webkit-text-stroke:0.7px #e9ecf0;">4</div></body></html>
